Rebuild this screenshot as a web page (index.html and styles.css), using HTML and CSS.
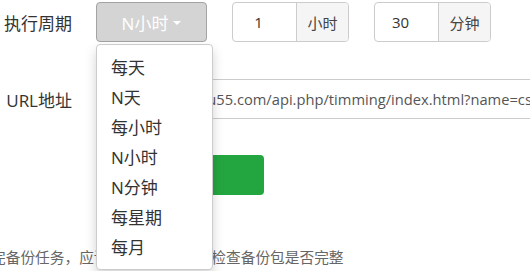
FILE: index.html
```html
<!DOCTYPE html>
<html lang="zh-CN">
<head>
<meta charset="utf-8">
<title>计划任务</title>
<link rel="stylesheet" href="styles.css">
</head>
<body>
<form class="form">
  <div class="row row-first">
    <label class="label">执行周期</label>
    <div class="dropdown">
      <button type="button" class="btn-select">N小时 <span class="caret"></span></button>
      <ul class="menu">
        <li>每天</li>
        <li>N天</li>
        <li>每小时</li>
        <li>N小时</li>
        <li>N分钟</li>
        <li>每星期</li>
        <li>每月</li>
      </ul>
    </div>
    <div class="group">
      <span class="num">1</span>
      <span class="addon">小时</span>
    </div>
    <div class="group">
      <span class="num">30</span>
      <span class="addon">分钟</span>
    </div>
  </div>
  <div class="row row-url">
    <label class="label">URL地址</label>
    <div class="url">http://www.abu55.com/api.php/timming/index.html?name=cs</div>
  </div>
  <div class="row row-submit">
    <span class="label"></span>
    <button type="button" class="btn-submit">提交</button>
  </div>
  <p class="help">完备份任务，应该定期下载备份并检查备份包是否完整</p>
</form>
</body>
</html>
```
FILE: styles.css
```css
html, body {
  margin: 0;
  padding: 0;
  background: #fff;
  overflow: hidden;
}
body {
  font-family: "Open Sans", "Noto Sans CJK SC", sans-serif;
  color: #333;
  width: 530px;
  height: 271px;
}
.form {
  display: flex;
  flex-direction: column;
  margin: 0;
}
.row {
  display: flex;
  align-items: center;
  height: 40px;
}
.row-first { margin-top: 2px; }
.row-url { margin-top: 37px; }
.row-submit { margin-top: 36px; }
.label {
  flex: none;
  width: 72px;
  margin-right: 24px;
  text-align: right;
  font-size: 17px;
  color: #333;
}
.dropdown {
  position: relative;
  flex: none;
}
.btn-select {
  display: flex;
  align-items: center;
  justify-content: center;
  gap: 5px;
  width: 111px;
  height: 40px;
  margin: 0;
  padding: 0;
  background: #d4d4d4;
  border: 1px solid #a3a3a3;
  border-radius: 4px;
  color: #fff;
  font-family: inherit;
  font-size: 17px;
}
.caret {
  width: 0;
  height: 0;
  border-left: 4px solid transparent;
  border-right: 4px solid transparent;
  border-top: 4px solid #fff;
  margin-top: 2px;
}
.menu {
  position: absolute;
  top: 42px;
  left: 0;
  z-index: 10;
  width: 115px;
  margin: 0;
  padding: 8px 0 6px;
  list-style: none;
  background: #fff;
  border: 1px solid #ccc;
  border-radius: 4px;
  box-shadow: 0 6px 12px rgba(0, 0, 0, 0.175);
}
.menu li {
  height: 30px;
  line-height: 30px;
  padding-left: 14px;
  font-size: 17px;
  color: #333;
}
.group {
  display: flex;
  height: 40px;
  margin-left: 25px;
  border: 1px solid #ccc;
  border-radius: 4px;
  box-sizing: border-box;
  font-size: 15px;
}
.num {
  display: flex;
  align-items: center;
  justify-content: center;
  width: 63px;
  padding-right: 12px;
  box-sizing: border-box;
  color: #333;
}
.addon {
  display: flex;
  align-items: center;
  justify-content: center;
  width: 52px;
  box-sizing: border-box;
  background: #f5f5f5;
  border-left: 1px solid #ccc;
  border-radius: 0 3px 3px 0;
  color: #444;
}
.url {
  flex: none;
  width: 600px;
  height: 40px;
  box-sizing: border-box;
  padding: 0 12px;
  display: flex;
  align-items: center;
  border: 1px solid #ccc;
  border-radius: 4px;
  font-size: 14.7px;
  color: #555;
  white-space: nowrap;
}
.btn-submit {
  flex: none;
  width: 168px;
  height: 40px;
  margin: 0;
  background: #23a63f;
  border: 0;
  border-radius: 4px;
  color: #fff;
  font-family: inherit;
  font-size: 16px;
}
.help {
  margin: 52px 0 0 -9px;
  font-size: 14.7px;
  line-height: 20px;
  color: #666;
  white-space: nowrap;
}
```
